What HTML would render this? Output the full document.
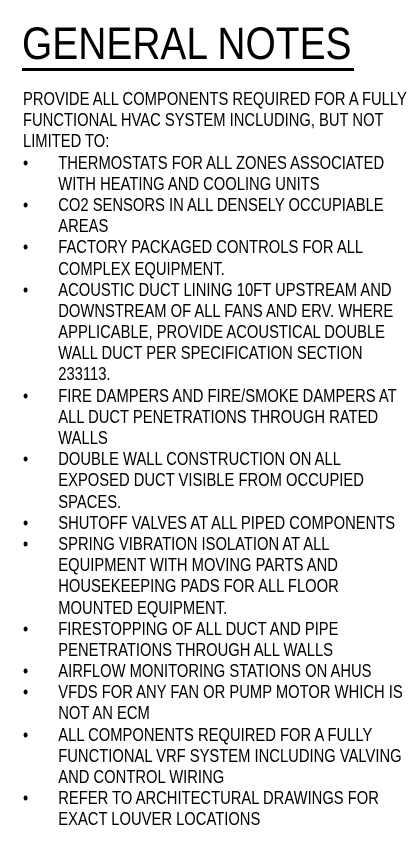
<!DOCTYPE html>
<html><head><meta charset="utf-8"><style>
html,body{margin:0;padding:0;background:#fff;width:417px;height:853px;overflow:hidden}
body{font-family:"Liberation Sans",Arial,sans-serif;color:#000;position:relative}
.t{position:absolute;left:22px;top:18px;font-size:45px;line-height:52px;white-space:nowrap;transform:scaleX(0.865);transform-origin:left top}
.u{position:absolute;left:22px;top:68px;width:332px;height:3px;background:#000}
.b{position:absolute;left:23px;top:89px;font-size:18px;line-height:21.2px;white-space:nowrap}
.l{transform:scaleX(0.82);transform-origin:left top;height:21.2px}
.i{position:relative;padding-left:43px}
.i .d{position:absolute;left:0;top:0}
.in{padding-left:43px}
</style></head><body>
<div class="t">GENERAL NOTES</div>
<div class="u"></div>
<div class="b">
<div class="l">PROVIDE ALL COMPONENTS REQUIRED FOR A FULLY</div>
<div class="l">FUNCTIONAL HVAC SYSTEM INCLUDING, BUT NOT</div>
<div class="l">LIMITED TO:</div>
<div class="l i"><span class="d">•</span>THERMOSTATS FOR ALL ZONES ASSOCIATED</div>
<div class="l in">WITH HEATING AND COOLING UNITS</div>
<div class="l i"><span class="d">•</span>CO2 SENSORS IN ALL DENSELY OCCUPIABLE</div>
<div class="l in">AREAS</div>
<div class="l i"><span class="d">•</span>FACTORY PACKAGED CONTROLS FOR ALL</div>
<div class="l in">COMPLEX EQUIPMENT.</div>
<div class="l i"><span class="d">•</span>ACOUSTIC DUCT LINING 10FT UPSTREAM AND</div>
<div class="l in">DOWNSTREAM OF ALL FANS AND ERV. WHERE</div>
<div class="l in">APPLICABLE, PROVIDE ACOUSTICAL DOUBLE</div>
<div class="l in">WALL DUCT PER SPECIFICATION SECTION</div>
<div class="l in">233113.</div>
<div class="l i"><span class="d">•</span>FIRE DAMPERS AND FIRE/SMOKE DAMPERS AT</div>
<div class="l in">ALL DUCT PENETRATIONS THROUGH RATED</div>
<div class="l in">WALLS</div>
<div class="l i"><span class="d">•</span>DOUBLE WALL CONSTRUCTION ON ALL</div>
<div class="l in">EXPOSED DUCT VISIBLE FROM OCCUPIED</div>
<div class="l in">SPACES.</div>
<div class="l i"><span class="d">•</span>SHUTOFF VALVES AT ALL PIPED COMPONENTS</div>
<div class="l i"><span class="d">•</span>SPRING VIBRATION ISOLATION AT ALL</div>
<div class="l in">EQUIPMENT WITH MOVING PARTS AND</div>
<div class="l in">HOUSEKEEPING PADS FOR ALL FLOOR</div>
<div class="l in">MOUNTED EQUIPMENT.</div>
<div class="l i"><span class="d">•</span>FIRESTOPPING OF ALL DUCT AND PIPE</div>
<div class="l in">PENETRATIONS THROUGH ALL WALLS</div>
<div class="l i"><span class="d">•</span>AIRFLOW MONITORING STATIONS ON AHUS</div>
<div class="l i"><span class="d">•</span>VFDS FOR ANY FAN OR PUMP MOTOR WHICH IS</div>
<div class="l in">NOT AN ECM</div>
<div class="l i"><span class="d">•</span>ALL COMPONENTS REQUIRED FOR A FULLY</div>
<div class="l in">FUNCTIONAL VRF SYSTEM INCLUDING VALVING</div>
<div class="l in">AND CONTROL WIRING</div>
<div class="l i"><span class="d">•</span>REFER TO ARCHITECTURAL DRAWINGS FOR</div>
<div class="l in">EXACT LOUVER LOCATIONS</div>
</div>
</body></html>
